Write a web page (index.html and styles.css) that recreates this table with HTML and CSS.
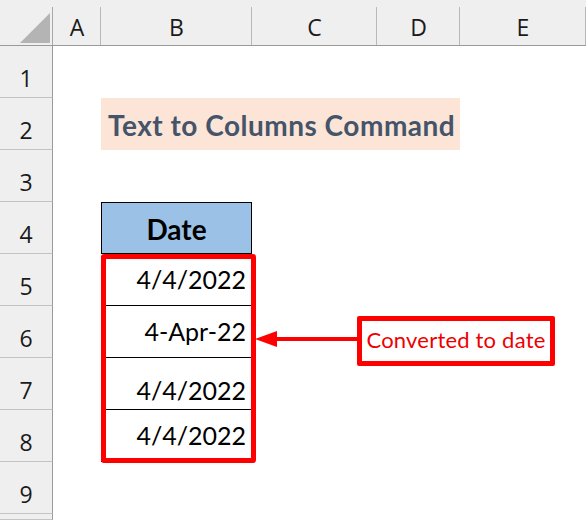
FILE: index.html
```html
<!DOCTYPE html>
<html>
<head>
<meta charset="utf-8">
<title>Text to Columns Command</title>
<link rel="stylesheet" href="styles.css">
</head>
<body>
<div class="sheet">
	<div class="corner"><svg width="53" height="46" viewBox="0 0 53 46"><polygon points="20,43 50,43 50,13" fill="#b4b4b4"/></svg></div>
	<div class="colhead">A</div>
	<div class="colhead">B</div>
	<div class="colhead">C</div>
	<div class="colhead">D</div>
	<div class="colhead">E</div>

	<div class="rowhead">1</div>
	<div class="cell"></div><div class="cell"></div><div class="cell"></div><div class="cell"></div><div class="cell"></div>

	<div class="rowhead">2</div>
	<div class="cell"></div>
	<div class="cell title">Text to Columns Command</div>
	<div class="cell"></div>

	<div class="rowhead">3</div>
	<div class="cell"></div><div class="cell"></div><div class="cell"></div><div class="cell"></div><div class="cell"></div>

	<div class="rowhead">4</div>
	<div class="cell"></div>
	<div class="cell heading">Date</div>
	<div class="cell"></div><div class="cell"></div><div class="cell"></div>

	<div class="rowhead">5</div>
	<div class="cell"></div>
	<div class="cell value">4/4/2022</div>
	<div class="cell"></div><div class="cell"></div><div class="cell"></div>

	<div class="rowhead">6</div>
	<div class="cell"></div>
	<div class="cell value">4-Apr-22</div>
	<div class="cell"></div><div class="cell"></div><div class="cell"></div>

	<div class="rowhead">7</div>
	<div class="cell"></div>
	<div class="cell value low">4/4/2022</div>
	<div class="cell"></div><div class="cell"></div><div class="cell"></div>

	<div class="rowhead">8</div>
	<div class="cell"></div>
	<div class="cell value">4/4/2022</div>
	<div class="cell"></div><div class="cell"></div><div class="cell"></div>

	<div class="rowhead">9</div>
	<div class="cell"></div><div class="cell"></div><div class="cell"></div><div class="cell"></div><div class="cell"></div>

	<div class="rowhead"></div>

	<!-- annotation drawn over the sheet -->
	<div class="highlight"></div>
	<svg class="arrow" width="104" height="20" viewBox="0 0 104 20"><rect x="20" y="8" width="84" height="4" fill="#ff0000"/><polygon points="0,10 22,2 22,18" fill="#ff0000"/></svg>
	<div class="callout">Converted to date</div>
</div>
</body>
</html>
```

FILE: styles.css
```css
* {
	box-sizing: border-box;
}
body {
	margin: 0;
	background-color: #ffffff;
}
div.sheet {
	position: relative;
	display: grid;
	grid-template-columns: 53px 48px 151px 125px 83px 126px;
	grid-template-rows: 46px repeat(9, 52px) 6px;
	width: 586px;
	height: 520px;
	overflow: hidden;
}
div.corner {
	background: linear-gradient(#a9a9a9, #a9a9a9) right bottom / 1px 38px no-repeat, #efefef;
	border-bottom: 1px solid #9a9a9a;
}
div.corner svg {
	display: block;
}
div.colhead {
	display: flex;
	align-items: center;
	justify-content: center;
	padding-top: 8px;
	font-family: "Open Sans", "Noto Sans", sans-serif;
	font-size: 23px;
	color: #1a1a1a;
	background: linear-gradient(#b9b9b9, #b9b9b9) right bottom / 1px 38px no-repeat, #efefef;
	border-bottom: 1px solid #9a9a9a;
}
div.rowhead {
	display: flex;
	align-items: flex-end;
	justify-content: center;
	padding-bottom: 3px;
	font-family: "Open Sans", "Noto Sans", sans-serif;
	font-size: 23px;
	color: #1a1a1a;
	background-color: #efefef;
	border-right: 1px solid #9a9a9a;
	border-bottom: 1px solid #c4c4c4;
}
div.cell {
	background-color: #ffffff;
}
div.title {
	grid-column: span 3;
	display: flex;
	align-items: center;
	padding: 2px 0 0 7px;
	background-color: #fce4d6;
	font-family: Lato, sans-serif;
	font-weight: bold;
	font-size: 28px;
	letter-spacing: 0.5px;
	color: #44546a;
}
div.heading {
	display: flex;
	align-items: center;
	justify-content: center;
	padding-top: 2px;
	background-color: #9bc2e6;
	border: 1px solid #000000;
	font-family: Lato, sans-serif;
	font-weight: bold;
	font-size: 28px;
	color: #000000;
}
div.value {
	display: flex;
	align-items: flex-end;
	justify-content: flex-end;
	padding: 0 6px 11px 0;
	border-bottom: 1px solid #000000;
	font-family: Lato, sans-serif;
	font-size: 25px;
	color: #000000;
}
div.value.low {
	padding-bottom: 4px;
}
div.highlight {
	position: absolute;
	left: 101px;
	top: 254px;
	width: 155px;
	height: 209px;
	border: 5px solid #ff0000;
	border-radius: 3px;
}
svg.arrow {
	position: absolute;
	left: 255px;
	top: 329px;
}
div.callout {
	position: absolute;
	left: 357px;
	top: 316px;
	width: 198px;
	height: 50px;
	display: flex;
	align-items: center;
	justify-content: center;
	padding-bottom: 3px;
	border: 5px solid #ff0000;
	border-radius: 2px;
	background-color: #ffffff;
	font-family: Lato, sans-serif;
	font-size: 22px;
	letter-spacing: 0.2px;
	color: #ee0000;
}
```
